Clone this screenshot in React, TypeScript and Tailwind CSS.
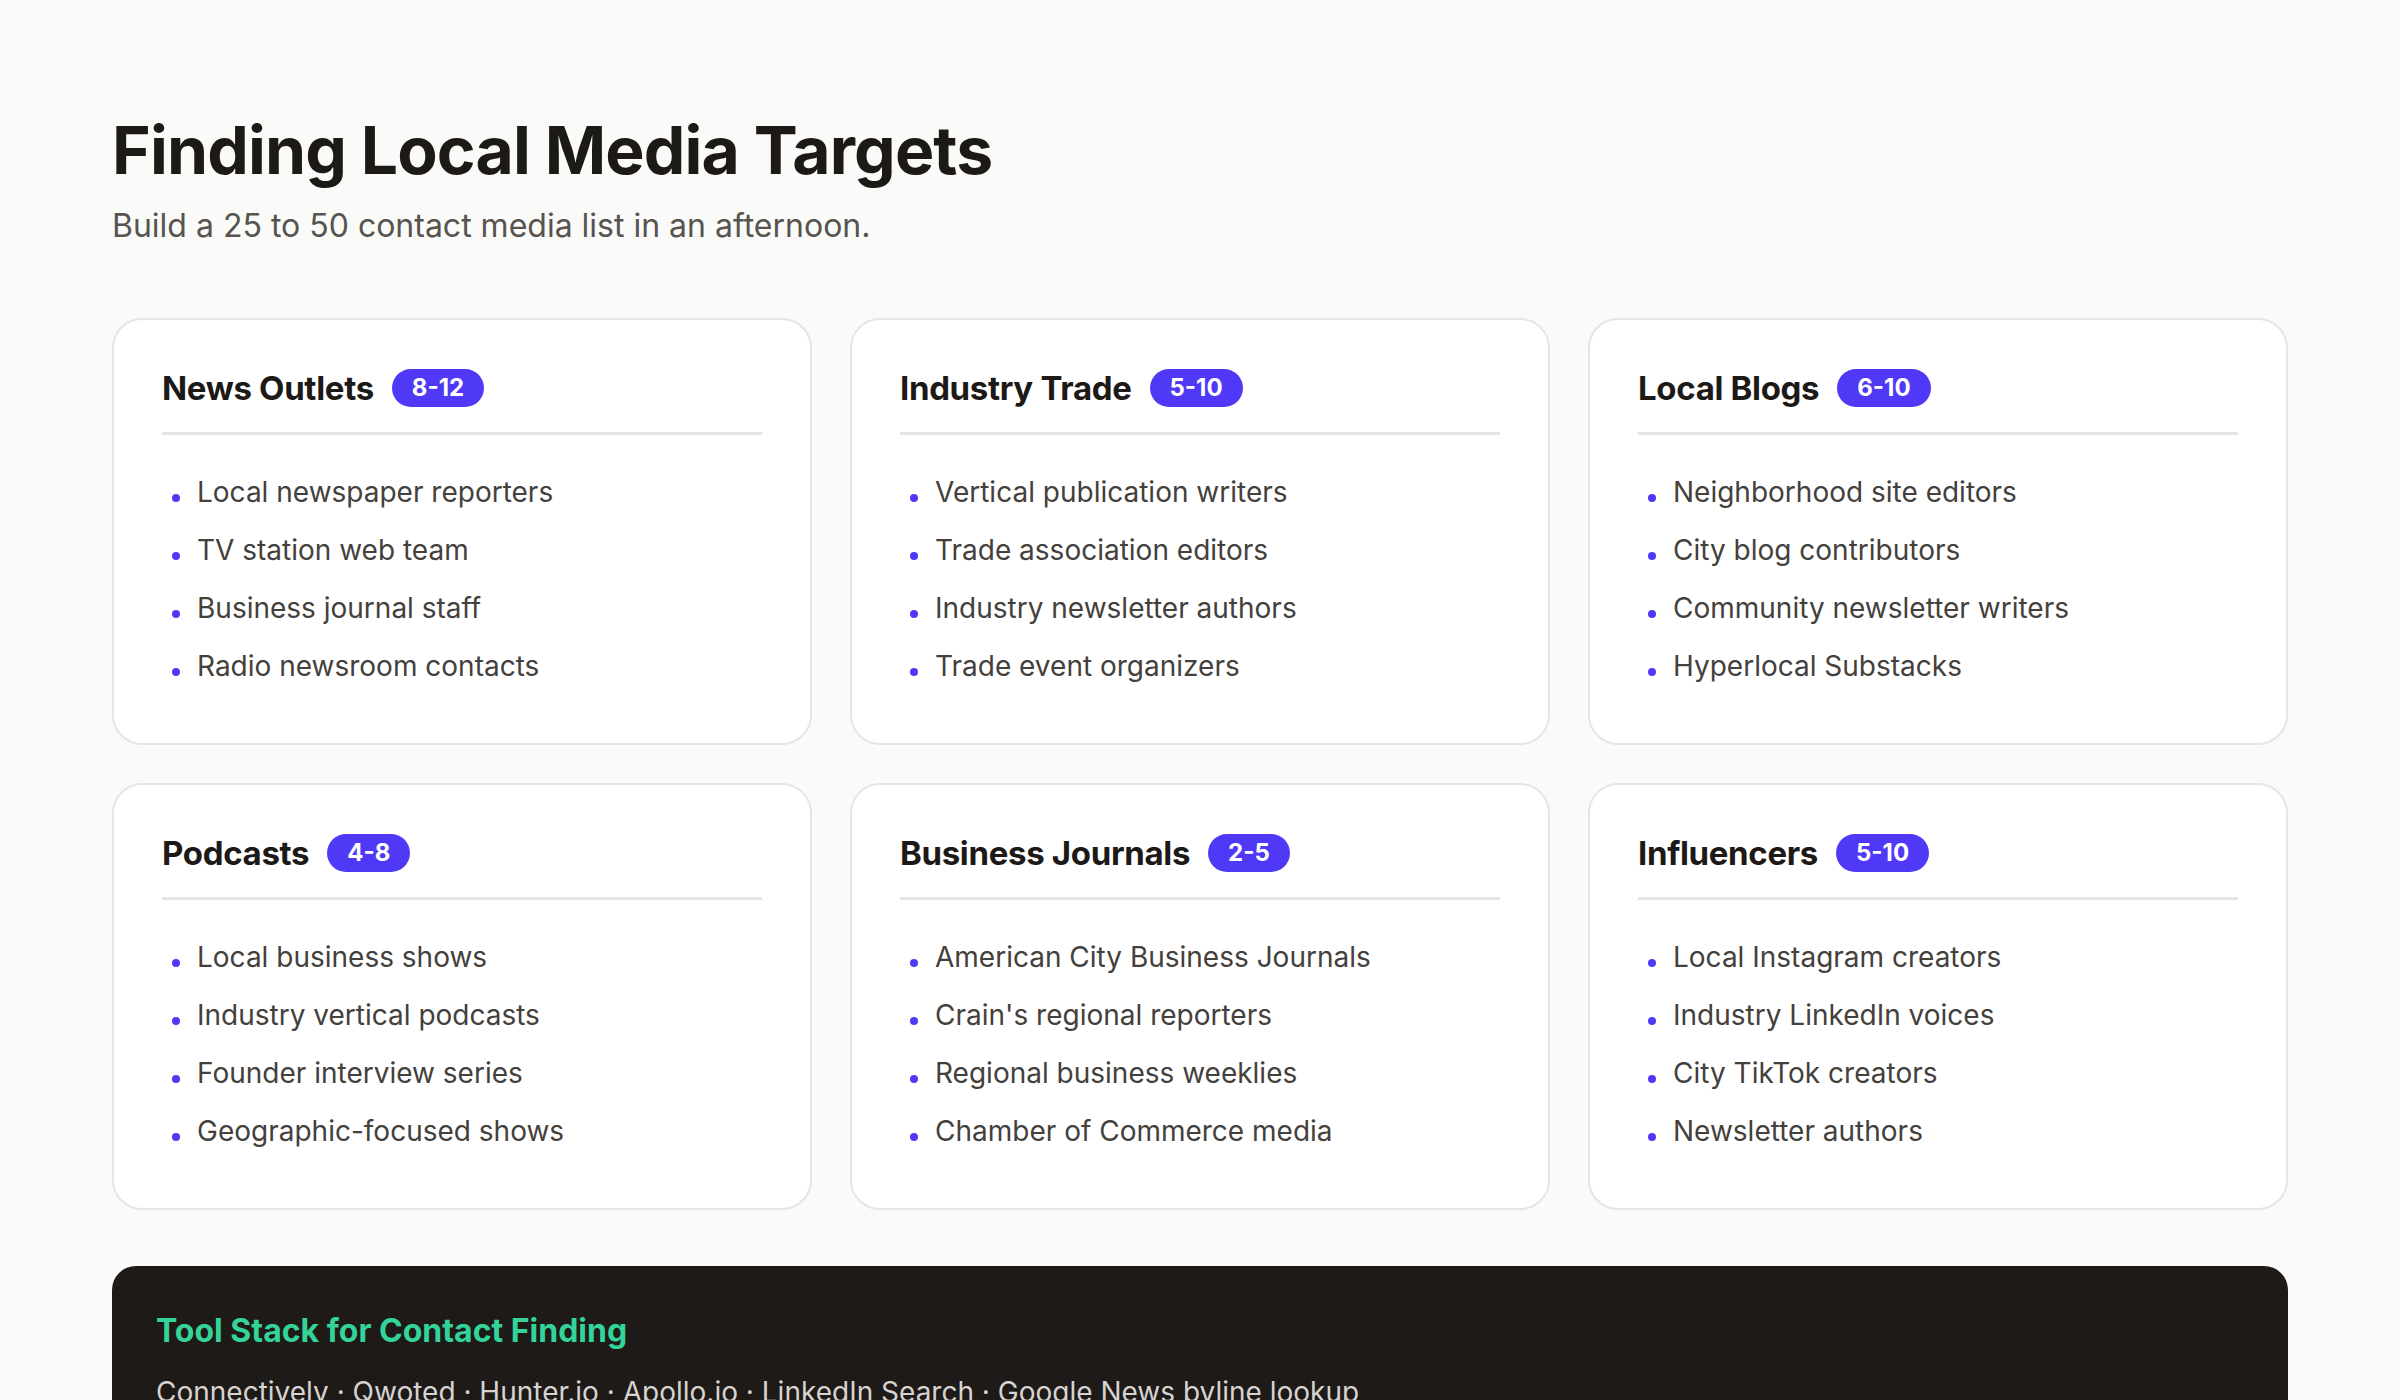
import React from 'react';

type Group = {
  title: string;
  range: string;
  items: string[];
};

const GROUPS: Group[] = [
  {
    title: 'News Outlets',
    range: '8-12',
    items: ['Local newspaper reporters', 'TV station web team', 'Business journal staff', 'Radio newsroom contacts'],
  },
  {
    title: 'Industry Trade',
    range: '5-10',
    items: ['Vertical publication writers', 'Trade association editors', 'Industry newsletter authors', 'Trade event organizers'],
  },
  {
    title: 'Local Blogs',
    range: '6-10',
    items: ['Neighborhood site editors', 'City blog contributors', 'Community newsletter writers', 'Hyperlocal Substacks'],
  },
  {
    title: 'Podcasts',
    range: '4-8',
    items: ['Local business shows', 'Industry vertical podcasts', 'Founder interview series', 'Geographic-focused shows'],
  },
  {
    title: 'Business Journals',
    range: '2-5',
    items: ['American City Business Journals', "Crain's regional reporters", 'Regional business weeklies', 'Chamber of Commerce media'],
  },
  {
    title: 'Influencers',
    range: '5-10',
    items: ['Local Instagram creators', 'Industry LinkedIn voices', 'City TikTok creators', 'Newsletter authors'],
  },
];

const TOOLS = ['Connectively', 'Qwoted', 'Hunter.io', 'Apollo.io', 'LinkedIn Search', 'Google News byline lookup'];

const GroupCard: React.FC<{ group: Group }> = ({ group }) => (
  <div className="bg-white border-2 border-[#e7e5e4] rounded-[30px] p-12">
    {/* Header */}
    <div className="flex items-center gap-[18px] pb-6 border-b-[3px] border-[#e5e5e4]">
      <h2 className="text-[33px] leading-[40px] font-bold tracking-[-0.01em] text-[#1c1917]">{group.title}</h2>
      <span className="px-5 py-[6px] rounded-full bg-[#4f39f6] text-white text-[24px] leading-[26px] font-bold">
        {group.range}
      </span>
    </div>

    {/* Items */}
    <ul className="mt-[28px]">
      {group.items.map((item) => (
        <li key={item} className="py-[9px] pl-[10px] text-[28px] leading-[40px] text-[#44403c]">
          <span className="inline-block w-[8px] h-[8px] rounded-full bg-[#4f39f6] mr-[17px]" />
          {item}
        </li>
      ))}
    </ul>
  </div>
);

const App: React.FC = () => {
  return (
    <div className="min-h-screen w-full bg-[#fafaf9] font-['Inter','Noto_Sans',sans-serif] px-[112px] pt-[114px] pb-16">
      <h1 className="text-[66px] leading-[72px] font-bold tracking-[-0.013em] text-[#1c1917]">
        Finding Local Media Targets
      </h1>
      <p className="mt-[20px] text-[32px] leading-[40px] text-[#57534e]">
        Build a 25 to 50 contact media list in an afternoon.
      </p>

      <div className="mt-[72px] grid grid-cols-3 gap-[38px]">
        {GROUPS.map((g) => (
          <GroupCard key={g.title} group={g} />
        ))}
      </div>

      {/* Tool stack */}
      <div className="mt-[56px] rounded-3xl bg-[#1e1a17] px-11 pt-[42px] pb-11">
        <h3 className="text-[32px] leading-[45px] font-bold text-[#34d399]">Tool Stack for Contact Finding</h3>
        <p className="mt-[18px] text-[28px] leading-[42px] text-[#d6d3d1]">{TOOLS.join(' · ')}</p>
      </div>
    </div>
  );
};

export default App;
